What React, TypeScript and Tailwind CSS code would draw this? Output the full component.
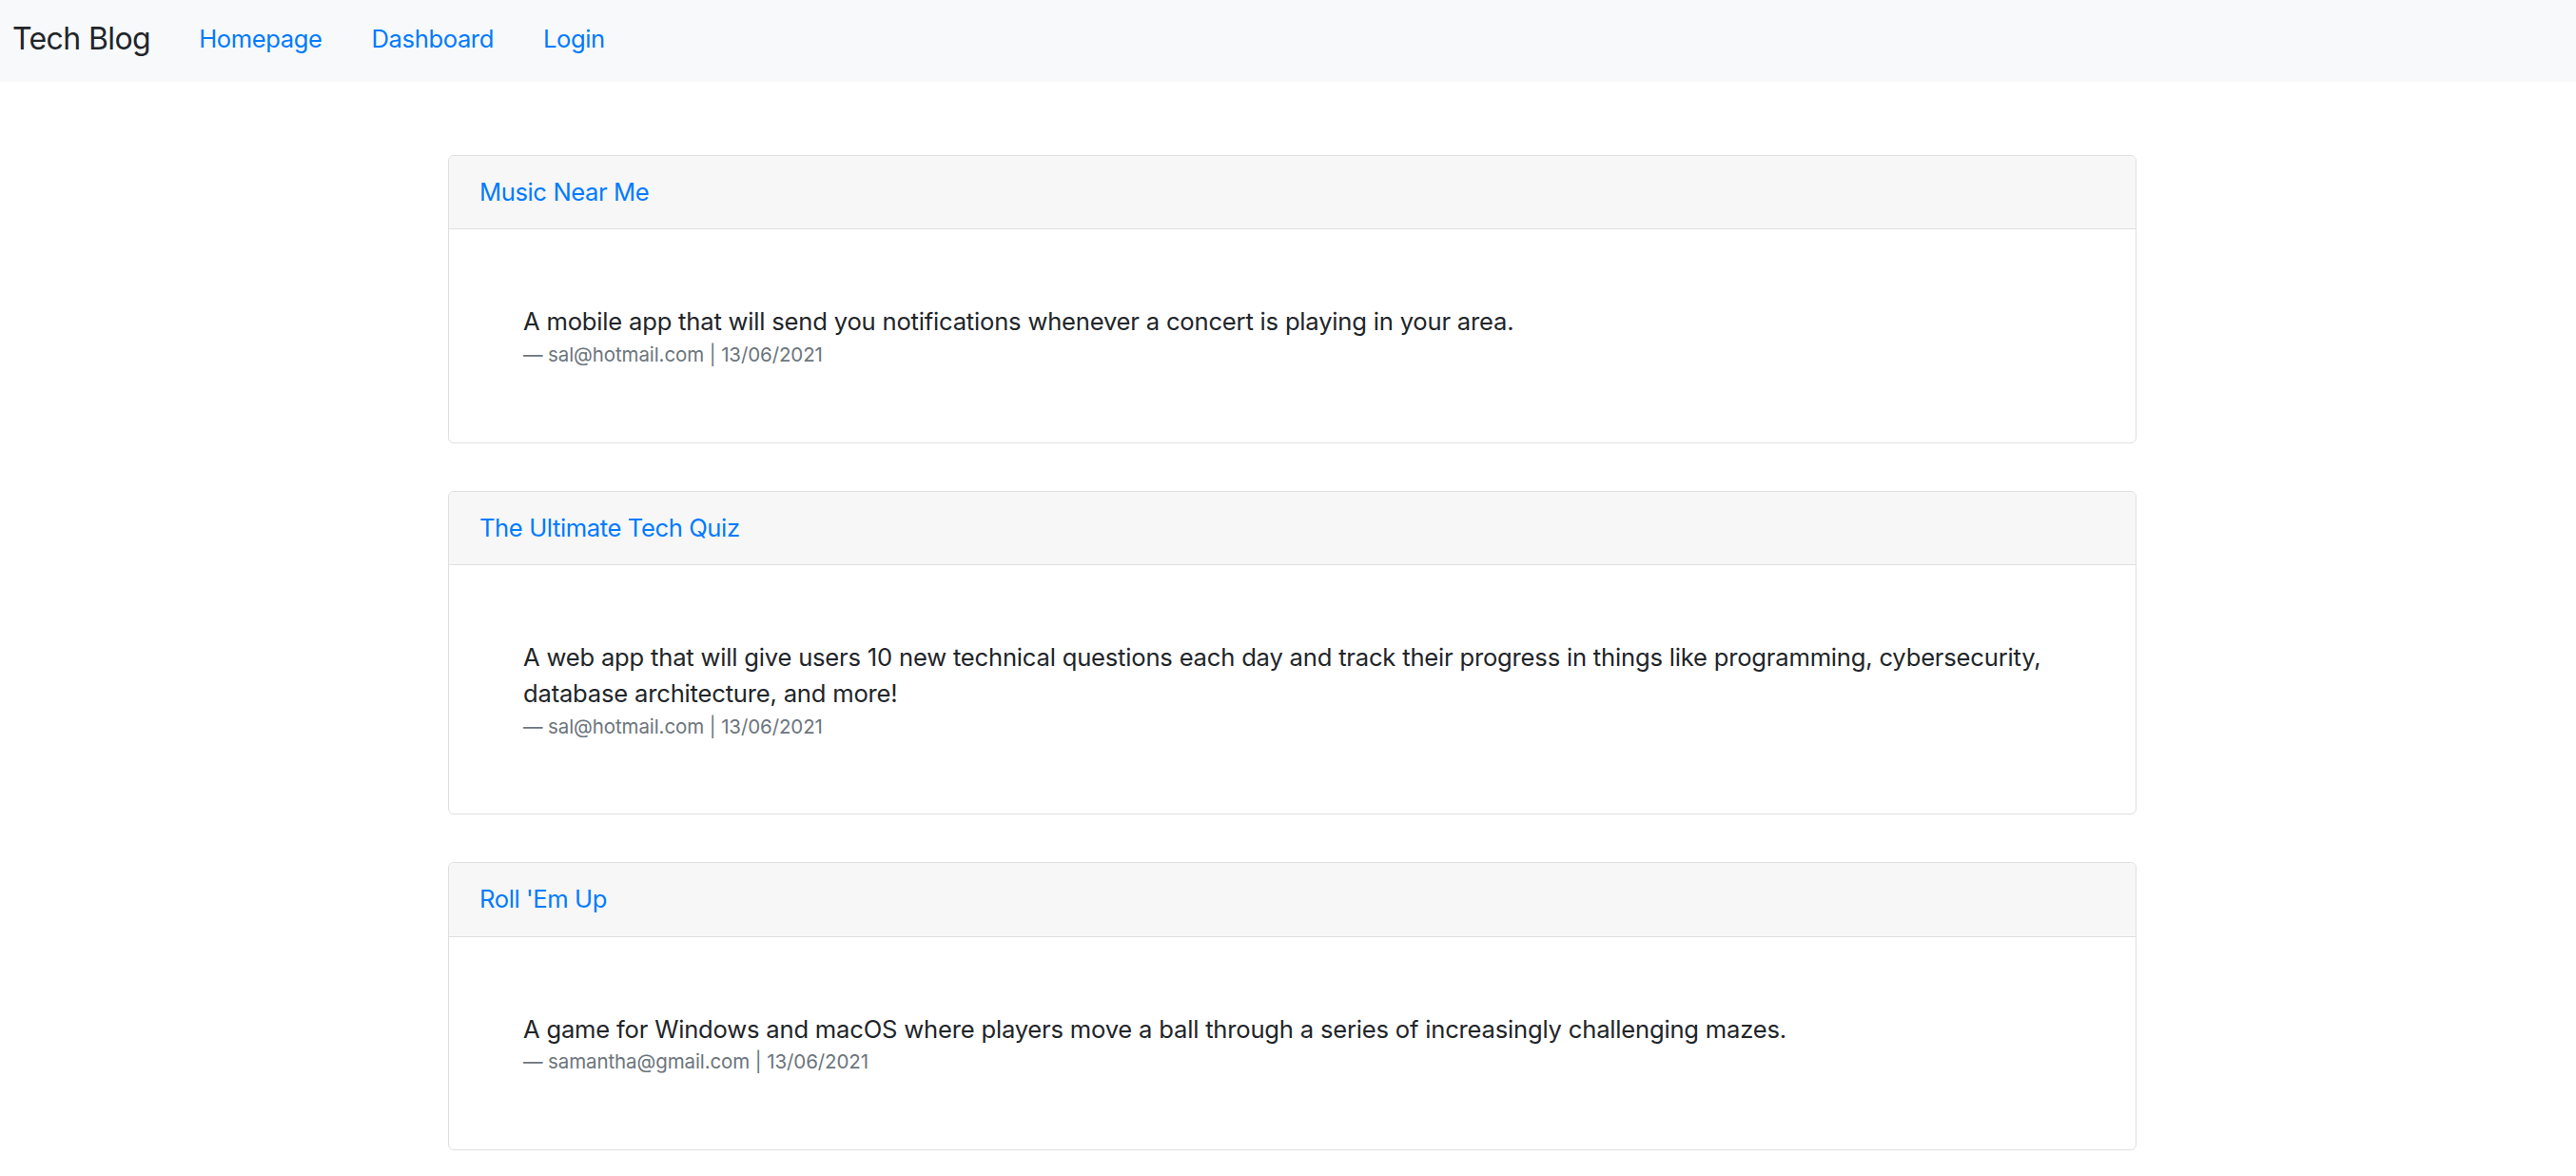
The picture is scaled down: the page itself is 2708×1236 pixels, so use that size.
const posts = [
  {
    title: "Music Near Me",
    body: "A mobile app that will send you notifications whenever a concert is playing in your area.",
    author: "sal@hotmail.com",
    date: "13/06/2021",
  },
  {
    title: "The Ultimate Tech Quiz",
    body: "A web app that will give users 10 new technical questions each day and track their progress in things like programming, cybersecurity, database architecture, and more!",
    author: "sal@hotmail.com",
    date: "13/06/2021",
  },
  {
    title: "Roll 'Em Up",
    body: "A game for Windows and macOS where players move a ball through a series of increasingly challenging mazes.",
    author: "samantha@gmail.com",
    date: "13/06/2021",
  },
];

function Navbar() {
  return (
    <nav className="flex h-[86px] items-center bg-[#f8f9fa] pb-[5px] pl-[13px]">
      <a href="#" className="mr-[25px] text-[32px] leading-[48px] tracking-[-0.6px] text-[#212529]">
        Tech Blog
      </a>
      <ul className="flex items-center">
        {["Homepage", "Dashboard", "Login"].map((l) => (
          <li key={l}>
            <a href="#" className="block px-[26px] text-[25.6px] leading-[38px] tracking-[-0.4px] text-[#007bff]">
              {l}
            </a>
          </li>
        ))}
      </ul>
    </nav>
  );
}

function PostCard({ post }: { post: (typeof posts)[number] }) {
  return (
    <div className="mb-[50px] rounded-[6px] border border-[#dfdfdf] bg-white">
      <div className="rounded-t-[6px] border-b border-[#dfdfdf] bg-[#f7f7f7] px-[32px] py-[19px]">
        <a href="#" className="text-[25.6px] leading-[38.4px] tracking-[-0.4px] text-[#007bff]">
          {post.title}
        </a>
      </div>
      <div className="px-[78px] pt-[78px] pb-[76px]">
        <p className="text-[25.6px] leading-[38.4px] tracking-[-0.2px] text-[#212529]">{post.body}</p>
        <footer className="text-[20.5px] leading-[30.7px] tracking-[-0.1px] text-[#6c757d]">
          &mdash; {post.author} | {post.date}
        </footer>
      </div>
    </div>
  );
}

export default function App() {
  return (
    <div className="min-h-screen bg-white font-['Inter',sans-serif]">
      <Navbar />
      <main className="ml-[471px] w-[1775px] pt-[77px]">
        {posts.map((p) => (
          <PostCard key={p.title} post={p} />
        ))}
      </main>
    </div>
  );
}
